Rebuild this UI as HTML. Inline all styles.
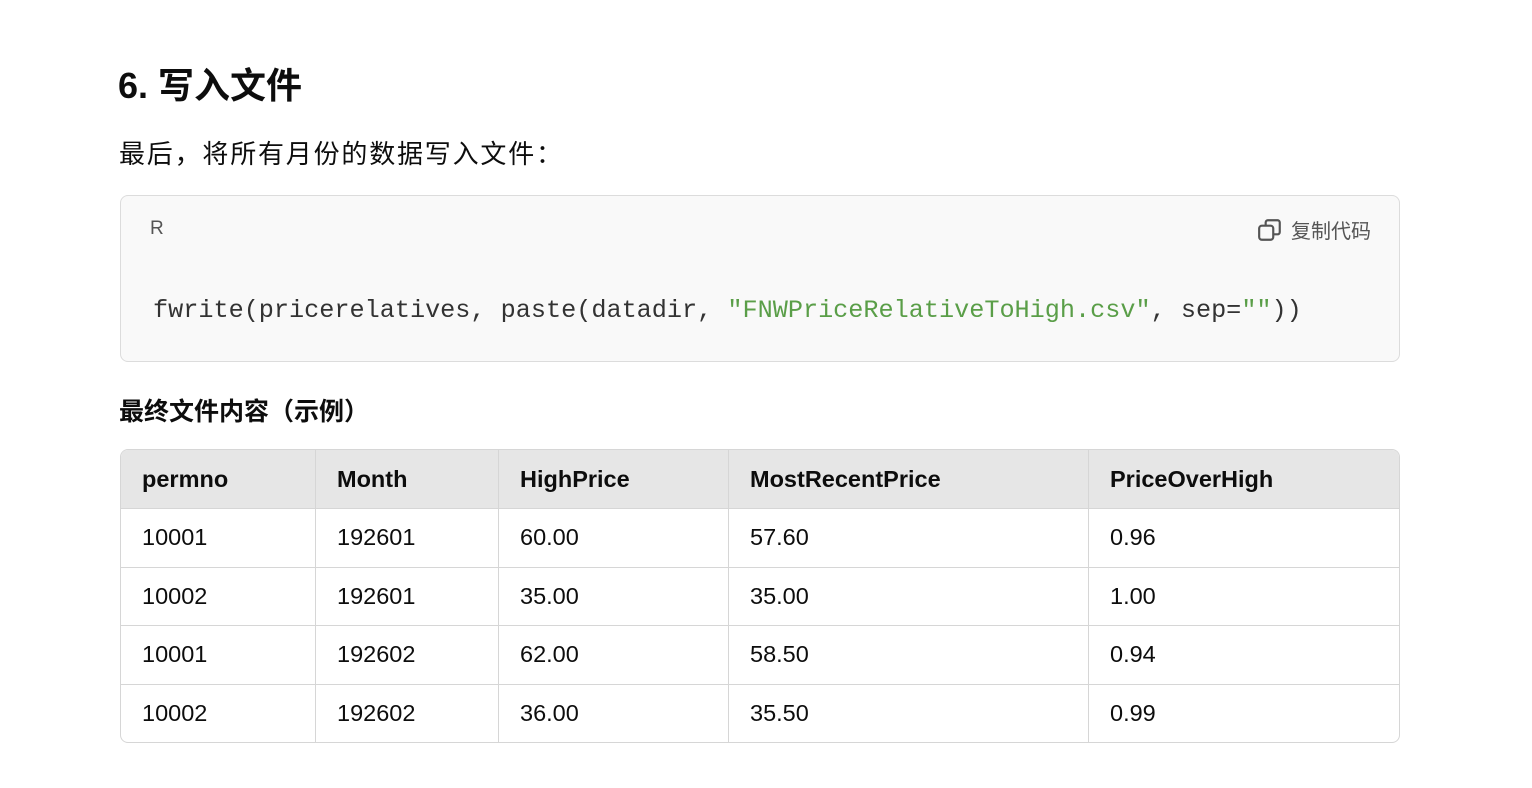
<!DOCTYPE html>
<html><head><meta charset="utf-8"><style>
body{margin:0;background:#fff;width:1532px;height:788px;overflow:hidden;font-family:"Liberation Sans","Noto Sans CJK SC",sans-serif;color:#0d0d0d;}
.h{position:absolute;left:118px;top:64px;font-size:36px;font-weight:bold;line-height:44px;}
.p{position:absolute;left:119px;top:136px;font-size:26px;line-height:36px;letter-spacing:1.8px;}
.code{position:absolute;left:120px;top:195px;width:1278px;height:165px;background:#f9f9f9;border:1px solid #dcdcdc;border-radius:8px;}
.lang{position:absolute;left:29px;top:22px;font-size:19px;color:#555;}
.copy{position:absolute;right:28px;top:19px;font-size:20px;color:#555;display:flex;align-items:center;gap:8px;}
.ln{position:absolute;left:32px;top:100px;font-family:"Liberation Mono",monospace;font-size:25.2px;color:#333;white-space:pre;}
.s{color:#5a9e48}
.h2{position:absolute;left:119px;top:394px;font-size:25px;font-weight:bold;line-height:36px;}
table{position:absolute;left:120px;top:449px;width:1280px;border-collapse:separate;border-spacing:0;border:1px solid #d6d6d6;border-radius:8px;overflow:hidden;font-size:23.5px;}
th,td{text-align:left;padding:0 21px;border-right:1px solid #d6d6d6;border-bottom:1px solid #d6d6d6;}
th{background:#e6e6e6;height:58px;font-weight:bold;}
td{height:57.5px;}
tr>*:last-child{border-right:none}
tr:last-child td{border-bottom:none}
</style></head><body>
<div class="h">6. 写入文件</div>
<div class="p">最后，将所有月份的数据写入文件：</div>
<div class="code">
<div class="lang">R</div>
<div class="copy"><svg width="26" height="26" viewBox="0 0 24 24" fill="none" stroke="#555" stroke-width="2"><rect x="2" y="8" width="13" height="13" rx="2.5"/><path d="M8 8V5a2 2 0 0 1 2-2h9a2 2 0 0 1 2 2v9a2 2 0 0 1-2 2h-4"/></svg>复制代码</div>
<div class="ln">fwrite(pricerelatives, paste(datadir, <span class="s">"FNWPriceRelativeToHigh.csv"</span>, sep=<span class="s">""</span>))</div>
</div>
<div class="h2">最终文件内容（示例）</div>
<table>
<tr><th style="width:152px">permno</th><th style="width:140px">Month</th><th style="width:187px">HighPrice</th><th style="width:317px">MostRecentPrice</th><th>PriceOverHigh</th></tr>
<tr><td>10001</td><td>192601</td><td>60.00</td><td>57.60</td><td>0.96</td></tr>
<tr><td>10002</td><td>192601</td><td>35.00</td><td>35.00</td><td>1.00</td></tr>
<tr><td>10001</td><td>192602</td><td>62.00</td><td>58.50</td><td>0.94</td></tr>
<tr><td>10002</td><td>192602</td><td>36.00</td><td>35.50</td><td>0.99</td></tr>
</table>
</body></html>
